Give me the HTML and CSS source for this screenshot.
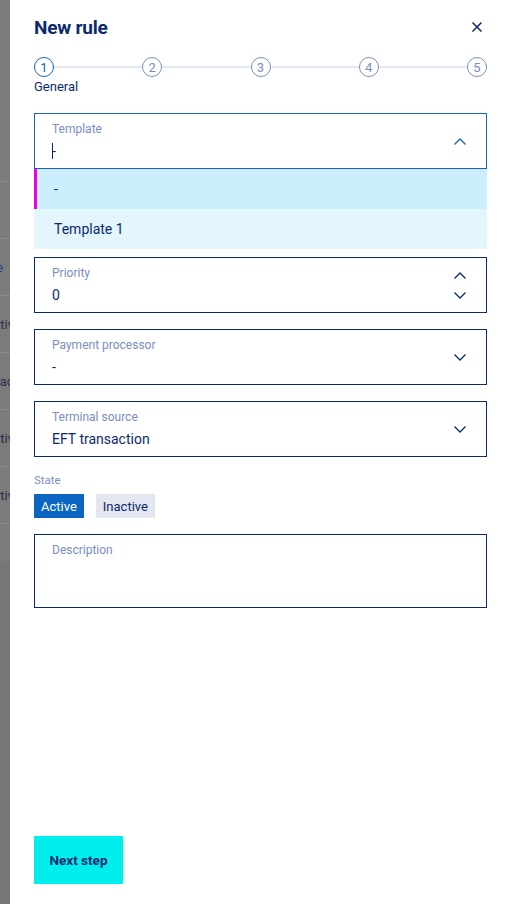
FILE: index.html
```html
<!DOCTYPE html>
<html lang="en">
<head>
  <meta charset="UTF-8" />
  <meta name="viewport" content="width=device-width, initial-scale=1" />
  <title>New rule</title>
  <link rel="stylesheet" href="styles.css">
</head>
<body>
  <div class="backdrop">
    <div class="bg-row bg-head"></div>
    <div class="bg-row"></div>
    <div class="bg-row"><span class="bg-link">Rule</span></div>
    <div class="bg-row"><span class="bg-active">Active</span></div>
    <div class="bg-row"><span class="bg-inactive">Inactive</span></div>
    <div class="bg-row"><span class="bg-active">Active</span></div>
    <div class="bg-row"><span class="bg-active">Active</span></div>
    <div class="bg-row bg-last"></div>
  </div>

  <aside class="panel">
    <header class="panel-head">
      <h1>New rule</h1>
      <button class="close" title="Close">
        <svg width="10" height="10" viewBox="0 0 10 10"><path d="M0.5 0.5L9.5 9.5M9.5 0.5L0.5 9.5" stroke="currentColor" stroke-width="1.5" fill="none"/></svg>
      </button>
    </header>

    <div class="stepper">
      <div class="steps">
        <span class="step current">1</span>
        <span class="step-line"></span>
        <span class="step">2</span>
        <span class="step-line"></span>
        <span class="step">3</span>
        <span class="step-line"></span>
        <span class="step">4</span>
        <span class="step-line"></span>
        <span class="step">5</span>
      </div>
      <div class="step-name">General</div>
    </div>

    <div class="field focused">
      <div class="field-text">
        <label>Template</label>
        <div class="value"><span class="caret"></span>-</div>
      </div>
      <svg class="chev" width="12" height="7" viewBox="0 0 12 7"><path d="M0.5 6.5L6 1L11.5 6.5" stroke="currentColor" stroke-width="1.3" fill="none"/></svg>
    </div>
    <ul class="options">
      <li class="option selected">-</li>
      <li class="option">Template 1</li>
    </ul>

    <div class="field">
      <div class="field-text">
        <label>Priority</label>
        <div class="value">0</div>
      </div>
      <div class="spin">
        <svg class="chev" width="12" height="7" viewBox="0 0 12 7"><path d="M0.5 6.5L6 1L11.5 6.5" stroke="currentColor" stroke-width="1.3" fill="none"/></svg>
        <svg class="chev" width="12" height="7" viewBox="0 0 12 7"><path d="M0.5 0.5L6 6L11.5 0.5" stroke="currentColor" stroke-width="1.3" fill="none"/></svg>
      </div>
    </div>

    <div class="field">
      <div class="field-text">
        <label>Payment processor</label>
        <div class="value">-</div>
      </div>
      <svg class="chev" width="12" height="7" viewBox="0 0 12 7"><path d="M0.5 0.5L6 6L11.5 0.5" stroke="currentColor" stroke-width="1.3" fill="none"/></svg>
    </div>

    <div class="field">
      <div class="field-text">
        <label>Terminal source</label>
        <div class="value">EFT transaction</div>
      </div>
      <svg class="chev" width="12" height="7" viewBox="0 0 12 7"><path d="M0.5 0.5L6 6L11.5 0.5" stroke="currentColor" stroke-width="1.3" fill="none"/></svg>
    </div>

    <div class="state">
      <div class="state-label">State</div>
      <div class="toggle">
        <button class="toggle-btn on">Active</button>
        <button class="toggle-btn">Inactive</button>
      </div>
    </div>

    <div class="field textarea">
      <div class="field-text">
        <label>Description</label>
      </div>
    </div>

    <div class="panel-foot">
      <button class="next">Next step</button>
    </div>
  </aside>
</body>
</html>
```

FILE: styles.css
```css
:root {
  --navy: #0b2a6e;
  --blue: #1565c0;
  --muted: #7b8dc2;
  --line: #e3e8f2;
  --font-family: Roboto, 'Noto Sans', sans-serif;
}

* { box-sizing: border-box; }

html, body {
  margin: 0;
  height: 100%;
}

body {
  display: flex;
  font-family: var(--font-family);
  color: var(--navy);
  background: #fff;
}

/* page behind the drawer, dimmed */
.backdrop {
  width: 10px;
  flex: none;
  background: #757676;
  overflow: hidden;
  display: flex;
  flex-direction: column;
}

.bg-row {
  height: 57px;
  border-bottom: 1px solid #8a8a8a;
  background: #7b7b7b;
  display: flex;
  align-items: center;
  font-size: 13px;
  white-space: nowrap;
  color: #27304d;
}

.bg-head { height: 182px; }
.bg-last { height: 37px; border-bottom: none; }

.bg-row span { display: block; }
.bg-link { color: #22407e; text-indent: -22px; }
.bg-active { text-indent: -15px; }
.bg-inactive { text-indent: -11px; }

/* drawer */
.panel {
  flex: 1;
  min-height: 100%;
  padding: 15px 18px 20px 24px;
  display: flex;
  flex-direction: column;
}

.panel-head {
  display: flex;
  justify-content: space-between;
  align-items: center;
  height: 24px;
}

h1 {
  margin: 0;
  font-size: 19px;
  font-weight: 700;
  letter-spacing: -0.2px;
  color: var(--navy);
}

.close {
  border: none;
  background: none;
  padding: 0;
  margin-right: 5px;
  color: var(--navy);
  display: flex;
  cursor: pointer;
}

.stepper {
  margin-top: 18px;
}

.steps {
  display: flex;
  align-items: center;
}

.step {
  width: 20px;
  height: 20px;
  border: 1px solid var(--muted);
  border-radius: 50%;
  display: flex;
  align-items: center;
  justify-content: center;
  font-size: 13px;
  color: var(--muted);
  flex: none;
}

.step.current {
  border-color: var(--blue);
  color: var(--blue);
}

.step-line {
  flex: 1;
  height: 2px;
  background: var(--line);
}

.step-name {
  font-size: 13px;
  line-height: 18px;
  margin-top: 1px;
}

.field {
  border: 1px solid var(--navy);
  padding: 7px 20px 6px 17px;
  display: flex;
  align-items: center;
  justify-content: space-between;
  margin-top: 16px;
  min-height: 56px;
}

.stepper + .field { margin-top: 17px; }

.field.focused { border-color: var(--blue); }
.field.focused .chev { color: var(--blue); }

.field-text {
  display: flex;
  flex-direction: column;
  gap: 4px;
  align-self: flex-start;
}

label {
  font-size: 12px;
  line-height: 16px;
  color: var(--muted);
}

.value {
  font-size: 14px;
  line-height: 20px;
  display: flex;
  align-items: center;
}

.caret {
  width: 1px;
  height: 16px;
  background: var(--navy);
  margin-right: -1px;
}

.chev {
  color: var(--navy);
  display: block;
}

.spin {
  display: flex;
  flex-direction: column;
  gap: 13px;
}

.options {
  list-style: none;
  margin: 0;
  padding: 0;
}

.option {
  height: 40px;
  display: flex;
  align-items: center;
  padding-left: 20px;
  font-size: 14px;
  background: #e3f5fd;
}

.option.selected {
  background: #cdeefd;
  box-shadow: inset 3px 0 0 #f000e8;
}

.options + .field { margin-top: 8px; }

.state {
  margin-top: 15px;
}

.state-label {
  font-size: 11.5px;
  line-height: 16px;
  color: var(--muted);
}

.toggle {
  display: flex;
  gap: 12px;
  margin-top: 6px;
}

.toggle-btn {
  border: none;
  height: 24px;
  padding: 0 7px;
  font-family: var(--font-family);
  font-size: 13px;
  background: #e4e7f0;
  color: var(--navy);
}

.toggle-btn.on {
  background: #0a66c2;
  color: #fff;
}

.field.textarea {
  margin-top: 16px;
  min-height: 74px;
}

.panel-foot {
  margin-top: auto;
}

.next {
  border: none;
  background: #00eeee;
  color: var(--navy);
  font-family: var(--font-family);
  font-weight: 700;
  font-size: 13.5px;
  width: 89px;
  height: 48px;
  cursor: pointer;
}
```
